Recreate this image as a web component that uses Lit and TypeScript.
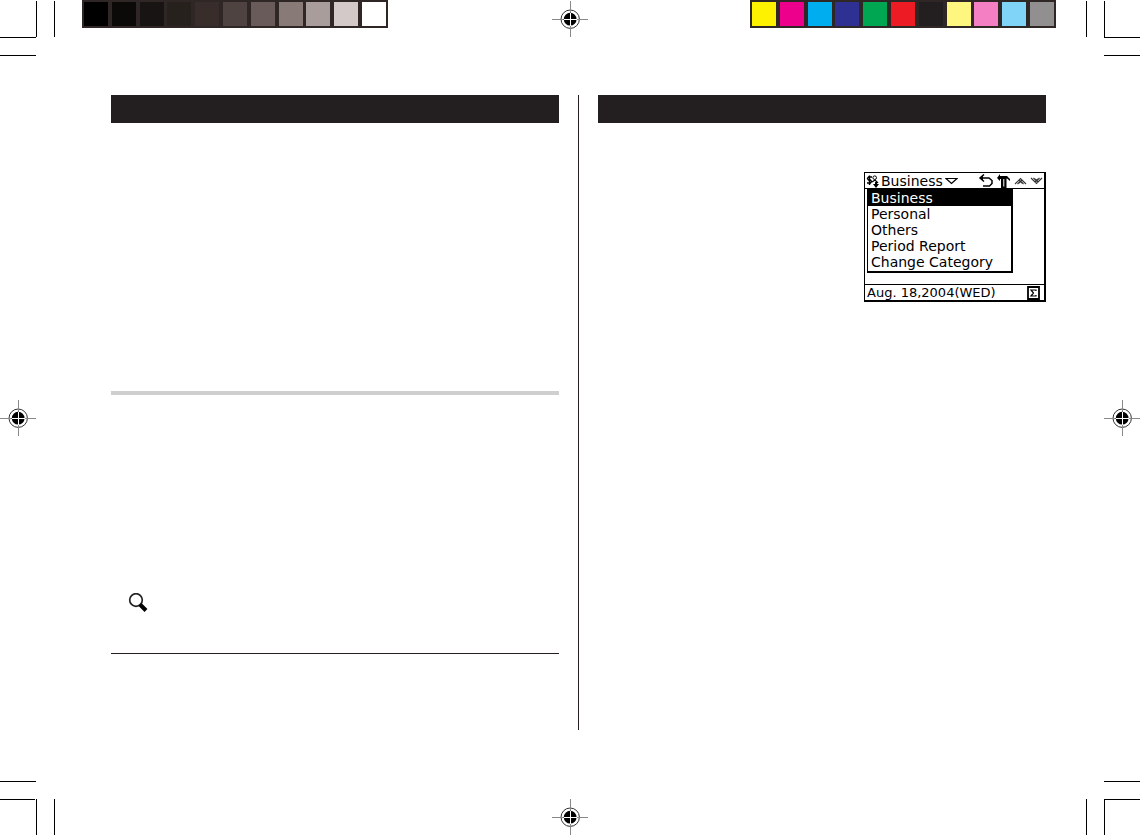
import { LitElement, html, css, svg } from "lit";
import { customElement, property, state } from "lit/decorators.js";

const GREYS = ["#000000", "#0b0a08", "#181413", "#26211d", "#392d2c", "#4e4341", "#685b59", "#877a77", "#a89d9a", "#d3c9c8", "#ffffff"];
const INKS = ["#fff200", "#ec008c", "#00aeef", "#2e3192", "#00a651", "#ed1c24", "#231f20", "#fff67f", "#f57fc3", "#7fd4f7", "#918f90"];

/** Registration target printed on each edge of the sheet. */
@customElement("reg-mark")
export class RegMark extends LitElement {
  static styles = css`
    :host { display: block; width: 36px; height: 36px; }
    svg { display: block; }
  `;
  render() {
    return html`<svg width="36" height="36" viewBox="0 0 36 36" aria-hidden="true">
      <circle cx="18.2" cy="18.2" r="9.2" fill="#fff" stroke="#333" />
      <path d="M18.5 0V36M0 18.5H36" stroke="#888" />
      <circle cx="18.2" cy="18.2" r="6.4" />
      <path d="M18.5 12V25M12 18.5H25" stroke="#fff" />
    </svg>`;
  }
}

/** Row of framed ink swatches. */
@customElement("swatch-strip")
export class SwatchStrip extends LitElement {
  @property({ attribute: false }) colors: string[] = [];
  static styles = css`
    :host { display: block; }
    .strip { display: flex; justify-content: space-between; box-sizing: border-box; width: 306px; padding: 2px; background: #2f2725; }
    .swatch { width: 24px; height: 24px; }
  `;
  render() {
    return html`<div class="strip">${this.colors.map((c) => html`<span class="swatch" style="background:${c}"></span>`)}</div>`;
  }
}

/** Organizer display with the category menu open. */
@customElement("organizer-screen")
export class OrganizerScreen extends LitElement {
  @state() private selected = 0;
  private items = ["Business", "Personal", "Others", "Period Report", "Change Category"];

  static styles = css`
    :host { display: block; color: #000; font: 14px/16px "DejaVu Sans", sans-serif; }
    .screen { box-sizing: border-box; width: 182px; height: 130px; border: solid #000; border-width: 1px 2px 2px 1px; display: flex; flex-direction: column; background: #fff; }
    button { appearance: none; border: 0; margin: 0; padding: 0; background: none; color: inherit; font: inherit; display: flex; align-items: center; }
    svg { display: block; }
    .bar { display: flex; align-items: center; height: 15px; border-bottom: 1px solid #000; padding: 0 1px; }
    .title { gap: 2px; }
    .tools { margin-left: auto; display: flex; gap: 3px; }
    .body { position: relative; flex: 1; }
    .menu { position: absolute; left: 2px; top: -1px; box-sizing: border-box; width: 146px; border: 2px solid #000; border-left-width: 1px; background: #fff; list-style: none; margin: 0; padding: 0 0 1px; }
    .item { width: 100%; padding-left: 3px; }
    .item.on { background: #000; color: #fff; }
    .status { display: flex; justify-content: space-between; align-items: center; height: 15px; border-top: 1px solid #000; padding: 0 4px 0 2px; font-size: 13px; }
  `;

  render() {
    return html`<div class="screen">
      <div class="bar">
        <button class="title" aria-haspopup="true" aria-expanded="true">
          <svg width="13" height="14" viewBox="0 0 13 14" fill="none" stroke="#000"><path d="M6 3H2.5L1.5 4.5L2.5 6H4.5L5.5 7.5L4.5 9H1M3.5 1.5V11" stroke-width="1.4" /><circle cx="8.7" cy="3.7" r="1.8" /><path d="M6 8L9 6L12 9" stroke-width="1.2" /><path d="M7 10H13L10 14Z M9 8H11V11H9Z" fill="#000" stroke="none" /></svg>
          <span>Business</span>
          <svg width="13" height="8" viewBox="0 0 13 8" fill="none" stroke="#000" stroke-width="1.2"><path d="M1 1.5H12L6.5 6.5Z" /></svg>
        </button>
        <div class="tools">
          <button aria-label="Back"><svg width="16" height="14" viewBox="0 0 16 14" fill="none" stroke="#000" stroke-width="1.5"><path d="M6 0.5L2 4L6 7.5M2 4H11L14 6.5V9.5L11.5 12H5" /><path d="M5 1V7L2 4Z" fill="#000" stroke="none" /></svg></button>
          <button aria-label="Tools"><svg width="14" height="14" viewBox="0 0 14 14"><path d="M0 4L3 0V2H10L13 5V7L10 4.5H9.5V14H4V5H3V7Z" /><path d="M6.8 5V12.5" stroke="#fff" /></svg></button>
          <button aria-label="Previous"><svg width="13" height="14" viewBox="0 0 13 14" fill="none" stroke="#333" stroke-width="1.1"><path d="M1 10L6.5 4.5L12 10M3.5 10L6.5 7L9.5 10M5 6L8 9M8 6L5 9" /></svg></button>
          <button aria-label="Next"><svg width="13" height="14" viewBox="0 0 13 14" fill="none" stroke="#333" stroke-width="1.1"><path d="M1 4L6.5 9.5L12 4M3.5 4L6.5 7L9.5 4M5 8L8 5M8 8L5 5" /></svg></button>
        </div>
      </div>
      <div class="body">
        <ul class="menu">
          ${this.items.map((t, i) => html`<li><button class="item ${i === this.selected ? "on" : ""}" @click=${() => (this.selected = i)}>${t}</button></li>`)}
        </ul>
      </div>
      <div class="status">
        <span>Aug. 18,2004(WED)</span>
        <button aria-label="Total"><svg width="13" height="14" viewBox="0 0 13 14" fill="none" stroke="#000"><path d="M1 1H12V13H1Z" stroke-width="1.8" /><path d="M9 5V4H4L6.5 7L4 10H9V9" stroke-width="1.2" /></svg></button>
      </div>
    </div>`;
  }
}

@customElement("app-root")
export class AppRoot extends LitElement {
  static styles = css`
    :host { display: block; background: #fff; }
    .sheet { display: grid; grid-template-columns: 56px 1fr 56px; grid-template-rows: 56px 1fr 55px; min-height: 100vh; }
    .corner { display: block; }
    .top { display: grid; grid-template-columns: 1fr 36px 1fr; align-items: start; }
    .greys { padding-left: 26px; }
    .mark { margin-top: 1px; }
    .inks { justify-self: end; padding-right: 28px; }
    .side { align-self: center; }
    .right { justify-self: end; }
    .foot { justify-self: center; align-self: end; }
    .pages { display: grid; grid-template-columns: 1fr 1px 1fr; gap: 19px; padding: 39px 38px 50px 55px; }
    .fold { background: #231f20; }
    .heading { height: 28px; background: #231f20; }
    .block { box-sizing: border-box; height: 272px; border-bottom: 4px solid #cfcfcf; }
    .notes { display: flex; align-items: flex-end; box-sizing: border-box; height: 259px; padding: 0 17px 40px; border-bottom: 1px solid #231f20; }
    .figure { display: flex; justify-content: flex-end; padding-top: 49px; }
  `;

  private corner(d: string, height: number) {
    return html`<svg class="corner" width="56" height=${height} aria-hidden="true">${svg`<path d=${d} stroke="#000" fill="none" />`}</svg>`;
  }

  render() {
    return html`<main class="sheet">
      ${this.corner("M36.5 1V37M54.5 1V37M0 37.5H36M0 55.5H36", 56)}
      <div class="top">
        <swatch-strip class="greys" .colors=${GREYS}></swatch-strip>
        <reg-mark class="mark"></reg-mark>
        <swatch-strip class="inks" .colors=${INKS}></swatch-strip>
      </div>
      ${this.corner("M2.5 1V37M20.5 1V37.5M20 37.5H56M20 55.5H56", 56)}
      <reg-mark class="side"></reg-mark>
      <div class="pages">
        <section>
          <div class="heading"></div>
          <div class="block"></div>
          <div class="notes">
            <svg width="20" height="20" viewBox="0 0 20 20" fill="none" stroke="#000"><circle cx="8" cy="7" r="6.3" stroke="#222" stroke-width="1.7" /><path d="M12 11.5L18 17.5" stroke-width="4" /></svg>
          </div>
        </section>
        <div class="fold"></div>
        <section>
          <div class="heading"></div>
          <div class="figure"><organizer-screen></organizer-screen></div>
        </section>
      </div>
      <reg-mark class="side right"></reg-mark>
      ${this.corner("M0 1.5H36M0 19.5H35M36.5 19V55M54.5 19V55", 55)}
      <reg-mark class="foot"></reg-mark>
      ${this.corner("M20 1.5H56M20 19.5H56M20.5 19V55M2.5 19V55", 55)}
    </main>`;
  }
}
